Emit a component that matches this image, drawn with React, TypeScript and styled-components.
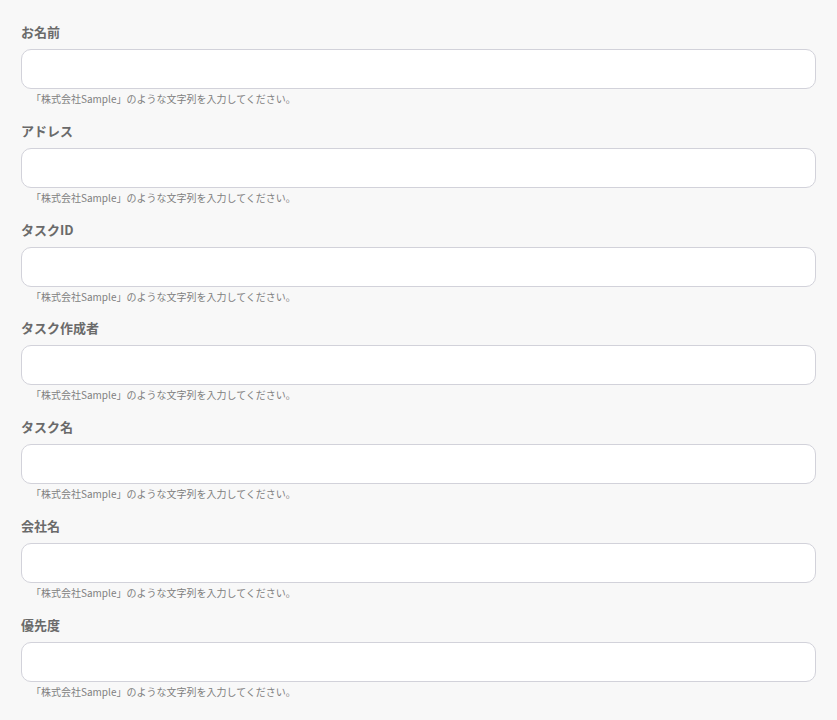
import styled, { createGlobalStyle } from 'styled-components';

const GlobalStyle = createGlobalStyle`
  html, body {
    margin: 0;
    padding: 0;
    background-color: #f8f8f8;
  }
  body {
    font-family: "Noto Sans CJK JP", "Noto Sans", sans-serif;
  }
`;

const fields = ['お名前', 'アドレス', 'タスクID', 'タスク作成者', 'タスク名', '会社名', '優先度'];

const App = () => {
  return (
    <>
      <GlobalStyle />
      <Form>
        {fields.map((name) => (
          <Field key={name}>
            <Label>{name}</Label>
            <Input type="text" />
            <Help>「株式会社Sample」のような文字列を入力してください。</Help>
          </Field>
        ))}
      </Form>
    </>
  );
};

export default App;

const Form = styled.div`
  display: flex;
  flex-direction: column;
  padding: 23px 21px 0 21px;
  width: 837px;
  box-sizing: border-box;
`;

const Field = styled.div`
  display: flex;
  flex-direction: column;
  margin-bottom: 15.83px;
`;

const Label = styled.label`
  font-size: 13px;
  line-height: 18px;
  font-weight: bold;
  color: #6a6a6a;
  margin-bottom: 8px;
`;

const Input = styled.input`
  height: 40px;
  width: 100%;
  box-sizing: border-box;
  border: 1px solid #d2d2da;
  border-radius: 10px;
  background-color: #fff;
  padding: 0 12px;
  font-size: 14px;
  outline: none;
`;

const Help = styled.div`
  font-size: 10px;
  line-height: 14px;
  color: #808080;
  margin-top: 3px;
  padding-left: 10px;
`;
